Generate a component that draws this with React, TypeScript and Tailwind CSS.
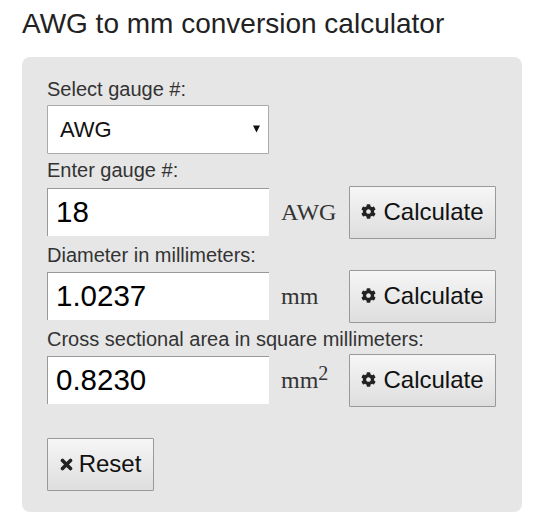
import React from 'react';
import { FaCog } from 'react-icons/fa';

const rows = [
  { label: 'Enter gauge #:', value: '18', unit: <>AWG</>, labelClass: 'h-[32px] text-[#333]' },
  { label: 'Diameter in millimeters:', value: '1.0237', unit: <>mm</>, labelClass: 'h-[31px] text-[#333]' },
  {
    label: 'Cross sectional area in square millimeters:',
    value: '0.8230',
    unit: (
      <>
        mm<sup className="top-0 text-[20px] leading-none align-[8px]">2</sup>
      </>
    ),
    labelClass: 'h-[31px] text-[#333]',
  },
];

const btnClass =
  'flex items-center justify-center border border-[#999] rounded-[1px] bg-gradient-to-b from-[#f6f6f6] to-[#dedede] text-[24px] text-[#111] h-[53px] pb-[1px]';

const App = () => {
  return (
    <div className="w-[549px] h-[522px] bg-white font-['Liberation_Sans',Arial,sans-serif] overflow-hidden">
      <div className="pl-[22px] pt-[7px]">
        <h1 className="text-[28px] leading-[34px] h-[50px] font-normal text-[#222]">AWG to mm conversion calculator</h1>
        <div className="w-[500px] h-[455px] bg-[#e6e6e6] rounded-[8px] pl-[25px] pt-[18px]">
          <div className="h-[30px] text-[20px] leading-[28px] text-[#333]">Select gauge #:</div>
          <div className="relative w-[222px] h-[49px]">
            <select
              defaultValue="AWG"
              className="appearance-none w-full h-full bg-white border border-[#aaa] rounded-[1px] pl-[12px] pb-[1px] text-[22px] text-[#111]"
            >
              <option>AWG</option>
              <option>SWG</option>
            </select>
            <svg className="absolute right-[8px] top-[20px] w-[8px] h-[8px]" viewBox="0 0 8 8">
              <path d="M0 0.5h7L3.5 7.5z" fill="#111" />
            </svg>
          </div>
          {rows.map((row) => (
            <div key={row.label}>
              <div className={`${row.labelClass} text-[20px] leading-[32px]`}>{row.label}</div>
              <div className="flex items-center h-[53px] pb-[1px]">
                <input
                  readOnly
                  value={row.value}
                  className="w-[222px] h-[48px] bg-white border-t border-l border-[#999] pl-[8px] pb-[1px] text-[29.5px] text-black outline-none"
                />
                <div className="w-[80px] pl-[12px] font-['Liberation_Serif','Times_New_Roman',serif] text-[24px] text-[#333]">
                  {row.unit}
                </div>
                <button className={`${btnClass} w-[147px] gap-[7px]`}>
                  <FaCog className="w-[15px] h-[15px] text-[#222]" />
                  Calculate
                </button>
              </div>
            </div>
          ))}
          <button className={`${btnClass} w-[107px] mt-[31px] gap-[6px]`}>
            <svg className="w-[13px] h-[13px]" viewBox="0 0 13 13">
              <path d="M2.5 2.5L10.5 10.5M10.5 2.5L2.5 10.5" stroke="#222" strokeWidth="3.6" strokeLinecap="round" />
            </svg>
            Reset
          </button>
        </div>
      </div>
    </div>
  );
};

export default App;
